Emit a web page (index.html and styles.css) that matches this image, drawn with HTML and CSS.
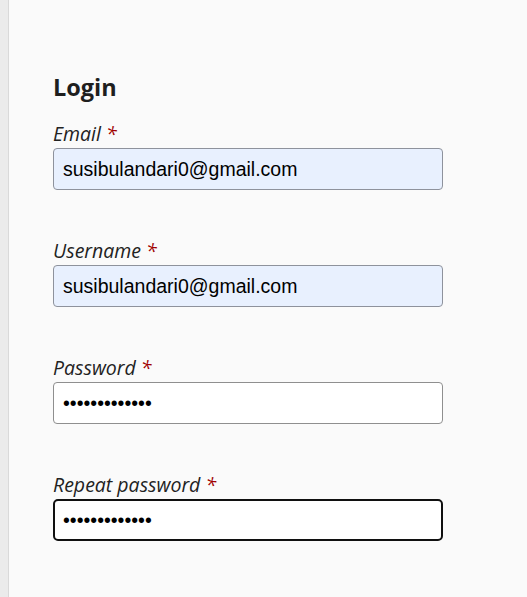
FILE: index.html
```html
<!DOCTYPE html>
<html>
<head>
<meta charset="utf-8">
<link rel="stylesheet" href="styles.css">
</head>
<body>
<div class="page">
  <aside class="rail"></aside>
  <main class="content">
    <form class="form">
      <h2 class="title">Login</h2>
      <div class="field">
        <label class="label">Email <span class="req">*</span></label>
        <input class="input autofill" type="text" value="susibulandari0@gmail.com">
      </div>
      <div class="field">
        <label class="label">Username <span class="req">*</span></label>
        <input class="input autofill" type="text" value="susibulandari0@gmail.com">
      </div>
      <div class="field">
        <label class="label">Password <span class="req">*</span></label>
        <input class="input" type="password" value="abcdefghijklm">
      </div>
      <div class="field">
        <label class="label">Repeat password <span class="req">*</span></label>
        <input class="input focused" type="password" value="abcdefghijklm">
      </div>
    </form>
  </main>
</div>
</body>
</html>
```
FILE: styles.css
```css
html, body {
  margin: 0;
  padding: 0;
  height: 100%;
}
body {
  background: #fafafa;
  font-family: "Open Sans", "Noto Sans", sans-serif;
  color: #222;
}
.page {
  display: flex;
  min-height: 597px;
}
.rail {
  width: 8px;
  flex: none;
  background: #ebebeb;
  border-right: 1px solid #d9d9d9;
}
.content {
  flex: 1;
  padding: 72px 0 0 44px;
}
.form {
  width: 390px;
}
.title {
  margin: 0 0 20px;
  font-size: 23.5px;
  line-height: 30px;
  font-weight: 700;
  color: #1e1e1e;
}
.field {
  display: flex;
  flex-direction: column;
  margin-bottom: 49px;
}
.label {
  font-style: italic;
  font-size: 19.5px;
  line-height: 24px;
  padding-bottom: 2px;
  color: #222;
}
.req {
  color: #a00000;
}
.input {
  box-sizing: border-box;
  width: 390px;
  height: 42px;
  margin: 0;
  padding: 0 9px;
  border: 1px solid #8f8f8f;
  border-radius: 4px;
  background: #ffffff;
  font-family: "Liberation Sans", Arial, sans-serif;
  font-size: 19.5px;
  color: #000;
  outline: none;
}
.autofill {
  background: #e8f0fe;
  border-color: #8e929c;
}
.focused {
  border: 2px solid #101010;
  border-radius: 5px;
  padding: 0 8px;
}
```
